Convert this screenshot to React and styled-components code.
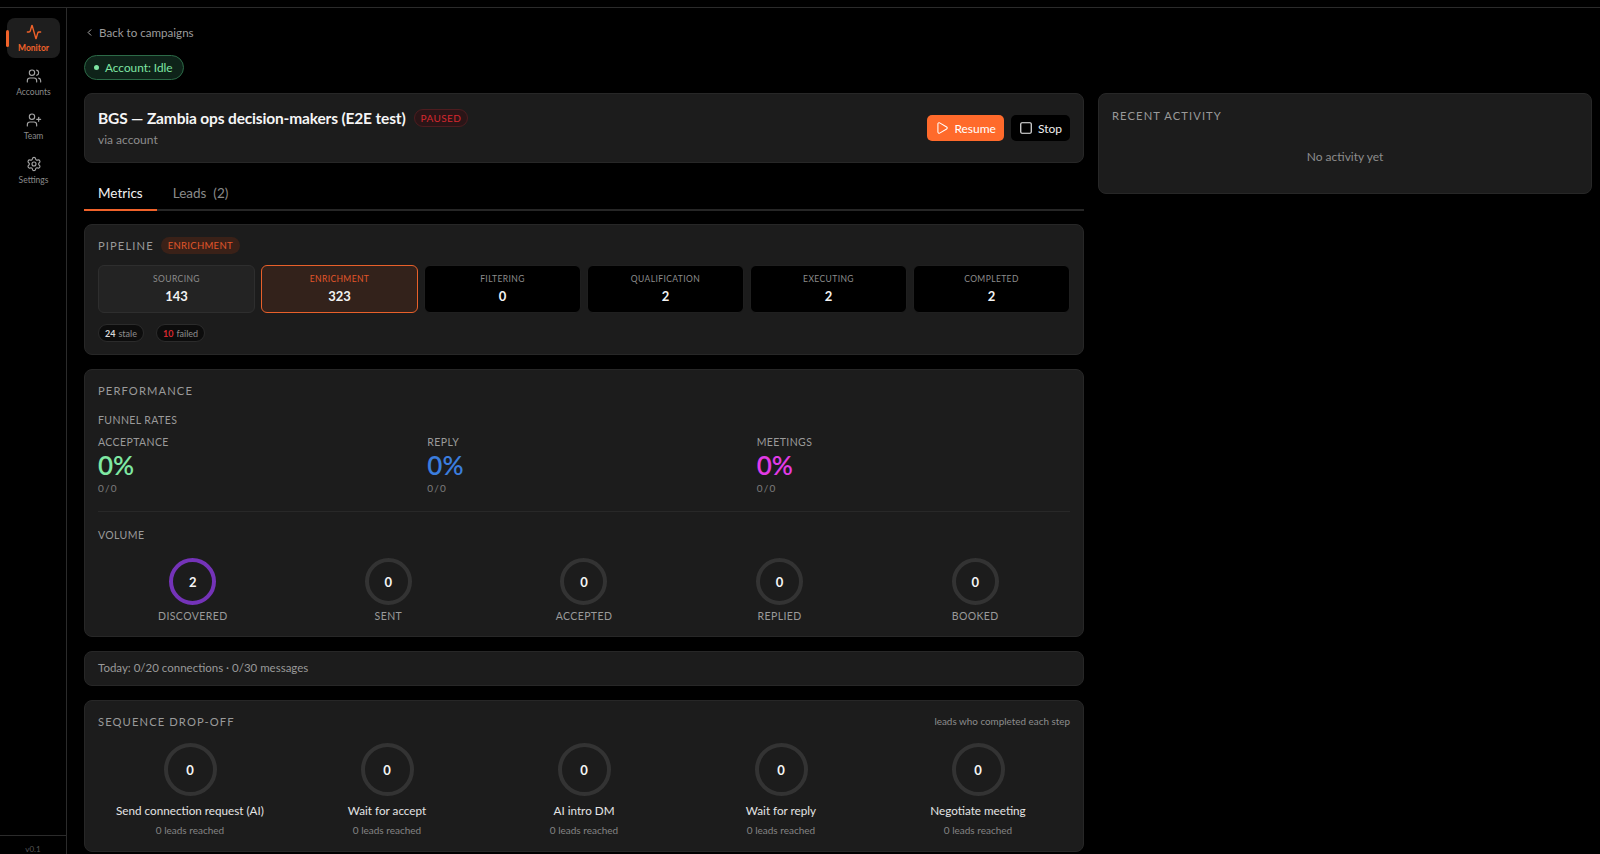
import React from 'react';
import styled, { createGlobalStyle } from 'styled-components';
import { Activity, Users, UserPlus, Settings, ChevronLeft, Play, Square } from 'lucide-react';

const GlobalStyle = createGlobalStyle`
  html, body {
    margin: 0;
    height: 100%;
    background: #000;
    overflow: hidden;
  }
  * { box-sizing: border-box; }
  body {
    font-family: Lato, "Open Sans", sans-serif;
    color: #f2f2f2;
  }
`;

const Shell = styled.div`
  height: 854px;
  display: flex;
  flex-direction: column;
`;

const TopStrip = styled.div`
  height: 8px;
  flex: none;
  border-bottom: 1px solid #2b2b2b;
`;

const Body = styled.div`
  flex: 1;
  display: flex;
  min-height: 0;
`;

const Sidebar = styled.aside`
  width: 67px;
  flex: none;
  border-right: 1px solid #2b2b2b;
  display: flex;
  flex-direction: column;
`;

const NavList = styled.nav`
  flex: 1;
  padding: 10px 6px 0 7px;
  display: flex;
  flex-direction: column;
  gap: 4px;
`;

const NavItem = styled.div`
  position: relative;
  height: 40px;
  border-radius: 8px;
  display: flex;
  flex-direction: column;
  align-items: center;
  justify-content: center;
  gap: 3px;
  font-size: 8.5px;
  font-weight: ${p => (p.$active ? 700 : 400)};
  color: ${p => (p.$active ? '#f0622a' : '#8a8a8a')};
  background: ${p => (p.$active ? '#1e1e1e' : 'transparent')};
  svg { color: ${p => (p.$active ? '#f0622a' : '#a5a5a5')}; }
`;

const ActiveMark = styled.span`
  position: absolute;
  left: -1px;
  top: 12px;
  width: 3px;
  height: 17px;
  border-radius: 2px;
  background: #f0622a;
`;

const Version = styled.div`
  height: 19px;
  border-top: 1px solid #2b2b2b;
  font-size: 8px;
  color: #555;
  text-align: center;
  padding-top: 8px;
`;

const Main = styled.main`
  flex: 1;
  min-width: 0;
  padding: 16px 8px 0 17px;
`;

const BackLink = styled.div`
  display: flex;
  align-items: center;
  gap: 4px;
  height: 17px;
  font-size: 11.6px;
  color: #9c9c9c;
  svg { color: #bcbcbc; }
`;

const StatusPill = styled.div`
  display: inline-flex;
  align-items: center;
  gap: 6px;
  height: 25px;
  margin-top: 14px;
  padding: 0 10px 0 9px;
  border-radius: 13px;
  border: 1px solid #2c6a47;
  background: #0e2319;
  color: #7fe5a3;
  font-size: 11.8px;
`;

const Dot = styled.span`
  width: 5px;
  height: 5px;
  border-radius: 50%;
  background: #7fe5a3;
`;

const Columns = styled.div`
  display: grid;
  grid-template-columns: 1000px 494px;
  gap: 14px;
  margin-top: 13px;
  align-items: start;
`;

const Stack = styled.div`
  display: flex;
  flex-direction: column;
`;

const Card = styled.section`
  background: #1c1c1c;
  border: 1px solid #272727;
  border-radius: 8px;
  padding: ${p => p.$pad || '11px 13px 13px'};
  margin-top: ${p => p.$mt || 0}px;
  height: ${p => (p.$h ? `${p.$h}px` : 'auto')};
`;

const CampaignCard = styled(Card)`
  height: 70px;
  padding: 0 13px 2px;
  display: flex;
  align-items: center;
  justify-content: space-between;
`;

const TitleRow = styled.div`
  display: flex;
  align-items: center;
  gap: 8px;
`;

const Title = styled.h1`
  margin: 0;
  font-size: 15.5px;
  line-height: 20px;
  font-weight: 700;
  letter-spacing: -0.16px;
  color: #f5f5f5;
`;

const PausedBadge = styled.span`
  height: 18px;
  padding: 0 6px;
  display: inline-flex;
  align-items: center;
  border-radius: 9px;
  border: 1px solid #4d1c1f;
  background: #2a1517;
  color: #d6282f;
  font-size: 10px;
  letter-spacing: 0.4px;
`;

const SubText = styled.div`
  margin-top: 4px;
  font-size: 12px;
  color: #8c8c8c;
`;

const Actions = styled.div`
  display: flex;
  gap: 7px;
  margin-top: 2px;
`;

const Button = styled.button`
  height: 26px;
  padding: 0 8px;
  display: flex;
  align-items: center;
  gap: 5px;
  border: none;
  border-radius: 5px;
  font: inherit;
  font-size: 12px;
  color: ${p => (p.$primary ? '#fff' : '#eee')};
  background: ${p => (p.$primary ? '#ff6a2b' : '#000')};
`;

const Tabs = styled.div`
  margin-top: 14px;
  height: 34px;
  display: flex;
  border-bottom: 2px solid #262626;
`;

const Tab = styled.div`
  height: 34px;
  padding: 0 14px;
  display: flex;
  align-items: center;
  font-size: 13.5px;
  white-space: pre;
  margin-right: ${p => (p.$active ? 2 : 0)}px;
  color: ${p => (p.$active ? '#f2f2f2' : '#8a8a8a')};
  border-bottom: 2px solid ${p => (p.$active ? '#f0622a' : 'transparent')};
`;

const SectionRow = styled.div`
  display: flex;
  align-items: center;
  justify-content: space-between;
  height: 18px;
`;

const SectionLeft = styled.div`
  display: flex;
  align-items: center;
  gap: 7px;
`;

const SectionLabel = styled.div`
  font-size: 11.2px;
  letter-spacing: 1.1px;
  color: #9a9a9a;
`;

const StageBadge = styled.span`
  height: 17px;
  padding: 0 7px;
  display: inline-flex;
  align-items: center;
  border-radius: 9px;
  background: #3a2118;
  color: #e2562a;
  font-size: 9.5px;
  letter-spacing: 0.3px;
`;

const StageGrid = styled.div`
  display: grid;
  grid-template-columns: repeat(6, 1fr);
  gap: 6px;
  margin-top: 11px;
`;

const StageBox = styled.div`
  height: 48px;
  border-radius: 6px;
  display: flex;
  flex-direction: column;
  align-items: center;
  justify-content: center;
  gap: 3px;
  background: ${p => (p.$state === 'active' ? '#33221b' : p.$state === 'done' ? '#232323' : '#000')};
  border: 1px solid ${p => (p.$state === 'active' ? '#e8602a' : p.$state === 'done' ? '#2e2e2e' : '#1f1f1f')};
`;

const StageName = styled.div`
  font-size: 8.5px;
  letter-spacing: 0.4px;
  line-height: 12px;
  color: ${p => (p.$active ? '#e2562a' : '#8c8c8c')};
`;

const StageCount = styled.div`
  font-size: 13px;
  line-height: 17px;
  font-weight: 700;
  color: #f2f2f2;
`;

const ChipRow = styled.div`
  display: flex;
  gap: 12px;
  margin-top: 11px;
`;

const Chip = styled.div`
  height: 18px;
  padding: 0 6px;
  display: flex;
  align-items: center;
  gap: 3px;
  border-radius: 9px;
  border: 1px solid #2b2b2b;
  background: #0c0c0c;
  font-size: 9px;
  color: #8c8c8c;
  b { color: ${p => (p.$danger ? '#d6282f' : '#d8d8d8')}; }
`;

const SubLabel = styled.div`
  margin-top: ${p => p.$mt || 0}px;
  font-size: 10.5px;
  line-height: 14px;
  letter-spacing: 0.4px;
  color: #9a9a9a;
`;

const RateGrid = styled.div`
  display: grid;
  grid-template-columns: repeat(3, 1fr);
  gap: 16px;
  margin-top: 8px;
`;

const RateValue = styled.div`
  font-size: 26px;
  line-height: 32px;
  font-weight: 600;
  color: ${p => p.$color};
`;

const RateDetail = styled.div`
  margin-top: 1px;
  font-size: 10px;
  line-height: 13px;
  letter-spacing: 1.2px;
  color: #7c7c7c;
`;

const Divider = styled.hr`
  margin: 16px 0 0;
  border: none;
  border-top: 1px solid #282828;
`;

const RingGrid = styled.div`
  display: grid;
  grid-template-columns: repeat(5, 1fr);
  gap: ${p => p.$gap}px;
  margin-top: ${p => p.$mt}px;
`;

const RingCell = styled.div`
  display: flex;
  flex-direction: column;
  align-items: center;
`;

const Ring = styled.div`
  width: ${p => p.$size}px;
  height: ${p => p.$size}px;
  border-radius: 50%;
  border: 4px solid ${p => p.$color || '#333'};
  display: flex;
  align-items: center;
  justify-content: center;
  font-size: 13px;
  font-weight: 700;
  color: #f5f5f5;
`;

const VolumeLabel = styled.div`
  margin-top: 4px;
  font-size: 10.5px;
  line-height: 14px;
  letter-spacing: 0.4px;
  color: #9a9a9a;
`;

const StepName = styled.div`
  margin-top: 6px;
  font-size: 11.7px;
  line-height: 16px;
  color: #e4e4e4;
`;

const StepMeta = styled.div`
  margin-top: 6px;
  font-size: 10px;
  line-height: 13px;
  color: #848484;
`;

const Note = styled.div`
  font-size: 9.9px;
  color: #8c8c8c;
`;

const TodayText = styled.div`
  font-size: 11.5px;
  color: #999;
`;

const EmptyText = styled.div`
  margin-top: 25px;
  text-align: center;
  font-size: 12px;
  color: #8c8c8c;
`;

const navItems = [
  { label: 'Monitor', icon: Activity, active: true },
  { label: 'Accounts', icon: Users },
  { label: 'Team', icon: UserPlus },
  { label: 'Settings', icon: Settings },
];

const stages = [
  { name: 'SOURCING', count: 143, state: 'done' },
  { name: 'ENRICHMENT', count: 323, state: 'active' },
  { name: 'FILTERING', count: 0 },
  { name: 'QUALIFICATION', count: 2 },
  { name: 'EXECUTING', count: 2 },
  { name: 'COMPLETED', count: 2 },
];

const rates = [
  { label: 'ACCEPTANCE', color: '#7fe8a2' },
  { label: 'REPLY', color: '#3b7ddd' },
  { label: 'MEETINGS', color: '#e23be6' },
];

const volume = [
  { label: 'DISCOVERED', value: 2, color: '#7433b8' },
  { label: 'SENT', value: 0 },
  { label: 'ACCEPTED', value: 0 },
  { label: 'REPLIED', value: 0 },
  { label: 'BOOKED', value: 0 },
];

const steps = [
  'Send connection request (AI)',
  'Wait for accept',
  'AI intro DM',
  'Wait for reply',
  'Negotiate meeting',
];

export default function App() {
  return (
    <Shell>
      <GlobalStyle />
      <TopStrip />
      <Body>
        <Sidebar>
          <NavList>
            {navItems.map(({ label, icon: Icon, active }) => (
              <NavItem key={label} $active={active}>
                {active && <ActiveMark />}
                <Icon size={16} strokeWidth={active ? 2 : 1.7} />
                {label}
              </NavItem>
            ))}
          </NavList>
          <Version>v0.1</Version>
        </Sidebar>

        <Main>
          <BackLink>
            <ChevronLeft size={11} />
            Back to campaigns
          </BackLink>
          <StatusPill>
            <Dot />
            Account: Idle
          </StatusPill>

          <Columns>
            <Stack>
              <CampaignCard>
                <div>
                  <TitleRow>
                    <Title>BGS — Zambia ops decision-makers (E2E test)</Title>
                    <PausedBadge>PAUSED</PausedBadge>
                  </TitleRow>
                  <SubText>via account</SubText>
                </div>
                <Actions>
                  <Button $primary>
                    <Play size={14} strokeWidth={1.8} />
                    Resume
                  </Button>
                  <Button>
                    <Square size={14} strokeWidth={2} />
                    Stop
                  </Button>
                </Actions>
              </CampaignCard>

              <Tabs>
                <Tab $active>Metrics</Tab>
                <Tab>Leads  (2)</Tab>
              </Tabs>

              <Card $mt={13} $h={131}>
                <SectionRow>
                  <SectionLeft>
                    <SectionLabel>PIPELINE</SectionLabel>
                    <StageBadge>ENRICHMENT</StageBadge>
                  </SectionLeft>
                </SectionRow>
                <StageGrid>
                  {stages.map(s => (
                    <StageBox key={s.name} $state={s.state}>
                      <StageName $active={s.state === 'active'}>{s.name}</StageName>
                      <StageCount>{s.count}</StageCount>
                    </StageBox>
                  ))}
                </StageGrid>
                <ChipRow>
                  <Chip><b>24</b> stale</Chip>
                  <Chip $danger><b>10</b> failed</Chip>
                </ChipRow>
              </Card>

              <Card $mt={14} $h={268}>
                <SectionRow>
                  <SectionLabel>PERFORMANCE</SectionLabel>
                </SectionRow>
                <SubLabel $mt={14}>FUNNEL RATES</SubLabel>
                <RateGrid>
                  {rates.map(r => (
                    <div key={r.label}>
                      <SubLabel>{r.label}</SubLabel>
                      <RateValue $color={r.color}>0%</RateValue>
                      <RateDetail>0/0</RateDetail>
                    </div>
                  ))}
                </RateGrid>
                <Divider />
                <SubLabel $mt={16}>VOLUME</SubLabel>
                <RingGrid $gap={6} $mt={16}>
                  {volume.map(v => (
                    <RingCell key={v.label}>
                      <Ring $size={47} $color={v.color}>{v.value}</Ring>
                      <VolumeLabel>{v.label}</VolumeLabel>
                    </RingCell>
                  ))}
                </RingGrid>
              </Card>

              <Card $mt={14} $h={35} $pad="9px 13px">
                <TodayText>Today: 0/20 connections · 0/30 messages</TodayText>
              </Card>

              <Card $mt={14} $h={152}>
                <SectionRow>
                  <SectionLabel>SEQUENCE DROP-OFF</SectionLabel>
                  <Note>leads who completed each step</Note>
                </SectionRow>
                <RingGrid $gap={13} $mt={13}>
                  {steps.map(name => (
                    <RingCell key={name}>
                      <Ring $size={53}>0</Ring>
                      <StepName>{name}</StepName>
                      <StepMeta>0 leads reached</StepMeta>
                    </RingCell>
                  ))}
                </RingGrid>
              </Card>
            </Stack>

            <Card $h={101} $pad="12px 13px 13px">
              <SectionRow>
                <SectionLabel>RECENT ACTIVITY</SectionLabel>
              </SectionRow>
              <EmptyText>No activity yet</EmptyText>
            </Card>
          </Columns>
        </Main>
      </Body>
    </Shell>
  );
}
